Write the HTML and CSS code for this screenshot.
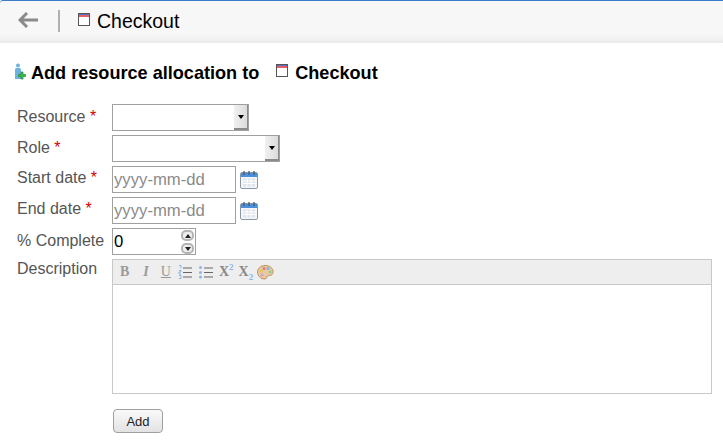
FILE: index.html

```html
<!DOCTYPE html>
<html lang="en">
<head>
    <meta charset="UTF-8">
    <title>Add resource allocation</title>
    <link rel="stylesheet" href="styles.css">
</head>
<body>
    <div class="topbar">
        <svg class="back-icon" width="20" height="16" viewBox="0 0 20 16"><path d="M9 1 2 8l7 7M3 8h17" fill="none" stroke="#8a8a8a" stroke-width="3"/></svg>
        <span class="divider"></span>
        <svg class="task-icon" width="12" height="13" viewBox="0 0 12 13"><rect x=".5" y=".5" width="11" height="12" fill="#fff" stroke="#555"/><rect x="1" y="1" width="10" height="1" fill="#5b6fc0"/><rect x="1" y="2" width="10" height="2" fill="#e2606a"/></svg>
        <span class="topbar-title">Checkout</span>
    </div>

    <h1 class="page-title">
        <svg class="add-icon" width="16" height="18" viewBox="0 0 16 18">
            <circle cx="3" cy="2.500" r="2" fill="#6db3e0"/>
            <path d="M0 6.500Q0 5 1.500 5h3Q6 5 6 6.500V16H0z" fill="#6db3e0"/>
            <path d="M5 9h2v2.500h2.500v2H7V16H5v-2.500H2.500v-2H5z" fill="#3cc04a" stroke="#1f8a2c" stroke-width=".7" transform="translate(1)"/>
        </svg>
        <span>Add resource allocation to</span>
        <svg class="task-icon heading-task" width="12" height="13" viewBox="0 0 12 13"><rect x=".5" y=".5" width="11" height="12" fill="#fff" stroke="#555"/><rect x="1" y="1" width="10" height="1" fill="#5b6fc0"/><rect x="1" y="2" width="10" height="2" fill="#e2606a"/></svg>
        <span>Checkout</span>
    </h1>

    <form class="form">
        <label class="form-label label-select">Resource <b>*</b></label>
        <div class="select select-resource"><span class="select-btn"><i></i></span></div>

        <label class="form-label label-select">Role <b>*</b></label>
        <div class="select select-role"><span class="select-btn"><i></i></span></div>

        <label class="form-label">Start date <b>*</b></label>
        <div class="date-field">
            <input class="text-input" type="text" placeholder="yyyy-mm-dd">
            <svg class="cal-icon" width="18" height="20" viewBox="0 0 18 20"><use href="#cal"/></svg>
        </div>

        <label class="form-label">End date <b>*</b></label>
        <div class="date-field">
            <input class="text-input" type="text" placeholder="yyyy-mm-dd">
            <svg class="cal-icon" width="18" height="20" viewBox="0 0 18 20"><use href="#cal"/></svg>
        </div>

        <label class="form-label label-select">% Complete</label>
        <div class="spinner">
            <input class="text-input spinner-input" type="text" value="0">
            <span class="spin-btn spin-up"><i></i></span>
            <span class="spin-btn spin-down"><i></i></span>
        </div>

        <label class="form-label label-desc">Description</label>
        <div class="editor">
            <div class="editor-bar">
                <span class="tool tool-b">B</span>
                <span class="tool tool-i">I</span>
                <span class="tool tool-u">U</span>
                <svg class="tool-svg tool-ol" width="14" height="14" viewBox="0 0 14 14"><path d="M1 .500h2v3M1 5.500h2v1.500H1V9h2M1 10.500h2v3H1" fill="none" stroke="#8db4e8"/><path d="M5 3h9M5 7.500h9M5 12h9" stroke="#666"/></svg>
                <svg class="tool-svg tool-ul" width="14" height="14" viewBox="0 0 14 14"><circle cx="1.500" cy="2.500" r="1.500" fill="#8db4e8"/><circle cx="1.500" cy="7.500" r="1.500" fill="#8db4e8"/><circle cx="1.500" cy="12" r="1.500" fill="#8db4e8"/><path d="M5 3h9M5 7.500h9M5 12h9" stroke="#666"/></svg>
                <span class="tool tool-x">X<sup>2</sup></span>
                <span class="tool tool-x tool-sub">X<sub>2</sub></span>
                <svg class="tool-svg tool-palette" width="17" height="15" viewBox="0 0 17 15"><path d="M8 .5C3.500.5.500 3.500.500 7s3 7 7 7c2.500 0 2-2 3-3s5 .5 5.500-3.500C16.500 3 12.500.5 8 .5z" fill="#e8c9a0" stroke="#b8925f"/><circle cx="4" cy="6" r="1.500" fill="#e6c84a"/><circle cx="7" cy="3.500" r="1.500" fill="#e57a7a"/><circle cx="11" cy="3.500" r="1.500" fill="#7ab8e5"/><circle cx="13" cy="7" r="1.500" fill="#8ccf8c"/><circle cx="5" cy="10" r="1.500" fill="#c9a0d8"/></svg>
            </div>
            <div class="editor-body"></div>
        </div>

        <div></div>
        <div class="actions"><button type="button" class="add-btn">Add</button></div>
    </form>

    <svg width="0" height="0" class="defs">
        <symbol id="cal" viewBox="0 0 18 20">
            <rect x=".5" y="2.500" width="17" height="16" rx="1.500" fill="#f4f6f8" stroke="#8a97a5"/>
            <rect x="1" y="3" width="16" height="4" fill="#4a8fdc"/>
            <path d="M4 1v4M9 1v4M14 1v4" stroke="#4a5a6a" stroke-width="1.300"/>
            <path d="M3 8.500h12v8H3z" fill="#dfe5ea"/>
            <path d="M3 11h12M3 13.500h12M7 8.500v8M11 8.500v8" stroke="#fff"/>
        </symbol>
    </svg>
</body>
</html>
```

FILE: styles.css

```css
html, body {
    margin: 0;
    padding: 0;
}
body {
    font-family: "Liberation Sans", Arial, sans-serif;
    background-color: white;
    color: #000;
    height: 440px;
    overflow: hidden;
}
.topbar {
    display: flex;
    align-items: center;
    height: 42px;
    border-top: 1px solid #3a7cc7;
    border-top-left-radius: 3px;
    background: linear-gradient(to bottom, #f7f7f7 0, #f7f7f7 33px, #ebebeb 42px);
}
.back-icon {
    margin-left: 18px;
    margin-top: -4px;
}
.divider {
    width: 2px;
    height: 22px;
    margin-left: 20px;
    margin-top: -2px;
    background-color: #b0b0b0;
}
.task-icon {
    flex: none;
}
.topbar .task-icon {
    margin-left: 18px;
    margin-top: -5px;
}
.topbar-title {
    margin-left: 7px;
    margin-top: -1px;
    font-size: 19.5px;
}
.page-title {
    display: flex;
    align-items: center;
    margin: 19px 0 0 15px;
    height: 22px;
    font-size: 18.1px;
    font-weight: bold;
}
.add-icon {
    margin-top: -2px;
}
.heading-task {
    margin: -5px 7px 0 17px;
}
.form {
    display: grid;
    grid-template-columns: 95px auto;
    justify-content: start;
    row-gap: 4px;
    margin: 20px 0 0 17px;
}
.form-label {
    font-size: 16px;
    line-height: 24px;
    color: #555;
    white-space: nowrap;
}
.label-select {
    padding-top: 1px;
}
.label-desc {
    margin-top: -2px;
}
.form-label b {
    color: #d00000;
    font-weight: normal;
}
.select {
    display: flex;
    justify-content: flex-end;
    box-sizing: border-box;
    height: 27px;
    border: 1px solid #a0a0a0;
    background-color: white;
}
.select-resource {
    width: 137px;
}
.select-role {
    width: 168px;
}
.select-btn {
    display: flex;
    align-items: center;
    justify-content: center;
    width: 13px;
    background: linear-gradient(to right, #f0f0f0, #dcdcdc);
    border-right: 1px solid #8a8a8a;
    border-bottom: 2px solid #8a8a8a;
}
.select-btn i {
    border-left: 3px solid transparent;
    border-right: 3px solid transparent;
    border-top: 4px solid #000;
}
.date-field {
    display: flex;
    align-items: center;
    gap: 4px;
}
.text-input {
    box-sizing: border-box;
    width: 124px;
    height: 27px;
    padding: 0 1px;
    border: 1px solid #a0a0a0;
    border-radius: 0;
    font-family: inherit;
    font-size: 16.7px;
    outline: none;
}
.text-input::placeholder {
    color: #8a8a8a;
}
.defs {
    position: absolute;
}
.spinner {
    position: relative;
    width: 84px;
}
.spinner-input {
    display: block;
    width: 84px;
}
.spin-btn {
    position: absolute;
    right: 2px;
    display: flex;
    align-items: center;
    justify-content: center;
    box-sizing: border-box;
    width: 13px;
    height: 11px;
    border: 2px solid #b4b4b4;
    border-radius: 5px;
    background-color: #eee;
}
.spin-up {
    top: 2px;
}
.spin-down {
    top: 15px;
}
.spin-up i {
    border-left: 3px solid transparent;
    border-right: 3px solid transparent;
    border-bottom: 4px solid #222;
}
.spin-down i {
    border-left: 3px solid transparent;
    border-right: 3px solid transparent;
    border-top: 4px solid #222;
}
.editor {
    box-sizing: border-box;
    width: 600px;
    border: 1px solid #c8c8c8;
}
.editor-bar {
    display: flex;
    align-items: center;
    height: 24px;
    padding-left: 7px;
    background-color: #eeeeee;
    border-bottom: 1px solid #c8c8c8;
}
.tool {
    font-family: "Liberation Serif", serif;
    font-size: 14px;
    font-weight: bold;
    color: #999;
}
.tool-i {
    margin-left: 14px;
    font-style: italic;
}
.tool-u {
    margin-left: 12px;
    font-weight: normal;
    text-decoration: underline;
}
.tool-svg {
    flex: none;
}
.tool-ol {
    margin-left: 7px;
}
.tool-ul {
    margin-left: 7px;
}
.tool-x {
    margin-left: 6px;
    color: #888;
}
.tool-x.tool-sub {
    margin-left: 5px;
}
.tool-palette {
    margin-left: 4px;
}
.tool-x sup, .tool-x sub {
    font-size: 9px;
    color: #8db4e8;
    line-height: 0;
}
.editor-body {
    height: 108px;
    background-color: white;
}
.actions {
    margin-top: 11px;
    padding-left: 1px;
}
.add-btn {
    box-sizing: border-box;
    width: 50px;
    height: 24px;
    padding: 0;
    border: 1px solid #a0a0a0;
    border-radius: 4px;
    background: linear-gradient(to bottom, #fafafa, #e2e2e2);
    font-family: inherit;
    font-size: 13px;
    color: #222;
}
```
